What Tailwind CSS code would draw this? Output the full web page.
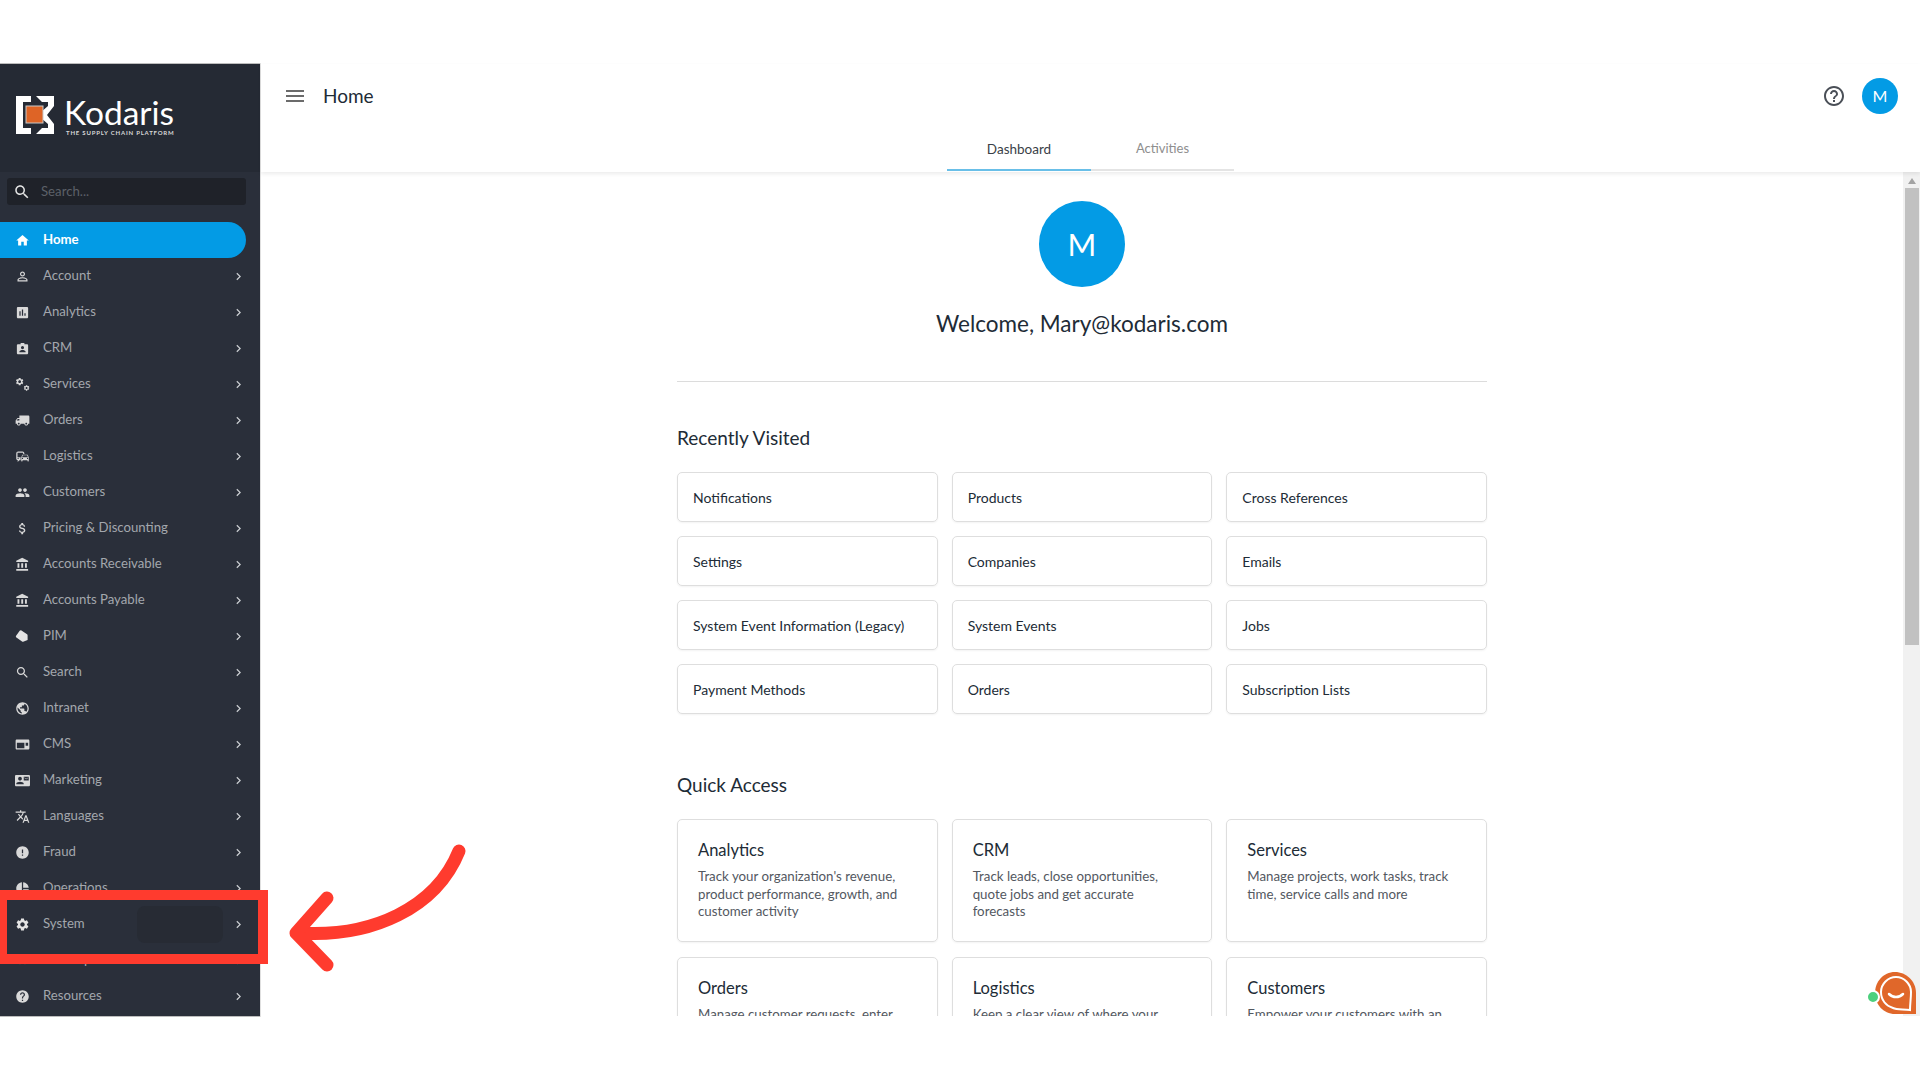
<!DOCTYPE html>
<html lang="en">
<head>
    <meta charset="UTF-8">
    <meta name="viewport" content="width=device-width, initial-scale=1.0">
    <title>Kodaris - Home</title>
    <script src="https://cdn.jsdelivr.net/npm/@tailwindcss/browser@4"></script>
</head>
<body class="bg-white font-['Lato','Liberation_Sans',sans-serif] text-[#212b36]">
<div class="relative h-[1080px] w-[1920px] overflow-hidden bg-white pt-[63px]">
    <div class="flex h-[954px]">

        <!-- Sidebar -->
        <aside class="flex w-[260px] shrink-0 flex-col overflow-hidden border-y border-[#bdbdbd] bg-[#2a2f3a] text-[13.200px] text-[#a3a7ad]">
            <div class="flex h-[108px] shrink-0 items-center bg-[#252a34] pb-[4px] pl-[15px]">
                <svg class="-mt-[3px] w-[40px] h-[40px] shrink-0" viewBox="0 0 40 40">
                    <path fill="#fff" d="M1 1H16V7H8V33H16V39H1Z"/>
                    <path fill="#fff" d="M21 1H39V11L32 20L39 29V39H21L27 33H33V29L26 23V17L33 11V7H27Z"/>
                    <rect x="11" y="11" width="17" height="17" fill="#de6426" stroke="#c9c9c9" stroke-width="1"/>
                </svg>
                <div class="ml-[9px] flex flex-col text-white">
                    <span class="text-[33.500px] leading-[32px]">Kodaris</span>
                    <span class="ml-[2px] mt-[1px] whitespace-nowrap text-[6px] leading-[7px] font-bold tracking-[0.8px] text-[#d8d8d8]">THE SUPPLY CHAIN PLATFORM</span>
                </div>
            </div>

            <div class="ml-[7px] mr-[14px] mt-[6px] flex h-[27px] shrink-0 items-center rounded-[3px] bg-[#1f2229] pl-[6px] text-[#5c6068]">
                <svg class="h-[18px] w-[18px]" viewBox="0 0 24 24" fill="#e4e4e4"><path d="M15.5 14h-.79l-.28-.27C15.41 12.59 16 11.11 16 9.5 16 5.91 13.09 3 9.5 3S3 5.91 3 9.5 5.91 16 9.5 16c1.61 0 3.09-.59 4.23-1.57l.27.28v.79l5 4.99L20.49 19l-4.99-5zm-6 0C7.01 14 5 11.99 5 9.5S7.01 5 9.5 5 14 7.01 14 9.5 11.99 14 9.5 14z"/></svg>
                <span class="ml-[10px]">Search...</span>
            </div>

            <nav class="mt-[17px] flex w-[246px] flex-col">
                <a class="flex h-[36px] items-center rounded-r-full bg-[#039be5] pl-[15px] font-bold text-white">
                    <svg class="h-[15px] w-[15px]" viewBox="0 0 24 24" fill="#fff"><path d="M10 20v-6h4v6h5v-8h3L12 3 2 12h3v8z"/></svg>
                    <span class="ml-[13px]">Home</span>
                </a>
                <a class="flex h-[36px] items-center pl-[15px]">
                    <svg class="h-[15px] w-[15px]" viewBox="0 0 24 24" fill="#d9d9d9"><path d="M12 5.9c1.16 0 2.1.94 2.1 2.1s-.94 2.1-2.1 2.1S9.9 9.16 9.9 8s.94-2.1 2.1-2.1m0 9c2.97 0 6.1 1.46 6.1 2.1v1.1H5.9V17c0-.64 3.13-2.1 6.1-2.1M12 4C9.79 4 8 5.79 8 8s1.79 4 4 4 4-1.79 4-4-1.79-4-4-4zm0 9c-2.67 0-8 1.34-8 4v3h16v-3c0-2.66-5.33-4-8-4z"/></svg>
                    <span class="ml-[13px] flex-1">Account</span>
                    <svg class="h-[15px] w-[15px]" viewBox="0 0 24 24" fill="#c9ccd0"><path d="M10 6L8.59 7.41 13.17 12l-4.58 4.59L10 18l6-6z"/></svg>
                </a>
                <a class="flex h-[36px] items-center pl-[15px]">
                    <svg class="h-[15px] w-[15px]" viewBox="0 0 24 24" fill="#d9d9d9"><path d="M19 3H5c-1.1 0-2 .9-2 2v14c0 1.1.9 2 2 2h14c1.1 0 2-.9 2-2V5c0-1.1-.9-2-2-2zM9 17H7v-7h2v7zm4 0h-2V7h2v10zm4 0h-2v-4h2v4z"/></svg>
                    <span class="ml-[13px] flex-1">Analytics</span>
                    <svg class="h-[15px] w-[15px]" viewBox="0 0 24 24" fill="#c9ccd0"><path d="M10 6L8.59 7.41 13.17 12l-4.58 4.59L10 18l6-6z"/></svg>
                </a>
                <a class="flex h-[36px] items-center pl-[15px]">
                    <svg class="h-[15px] w-[15px]" viewBox="0 0 24 24" fill="#d9d9d9"><path fill-rule="evenodd" d="M5 5h4V3h6v2h4c1.1 0 2 .9 2 2v12c0 1.1-.9 2-2 2H5c-1.1 0-2-.9-2-2V7c0-1.1.9-2 2-2zm7 3a2.5 2.5 0 1 0 0 5 2.5 2.5 0 0 0 0-5zm-5 10h10v-1c0-1.7-3.3-2.6-5-2.6S7 15.300 7 17z"/></svg>
                    <span class="ml-[13px] flex-1">CRM</span>
                    <svg class="h-[15px] w-[15px]" viewBox="0 0 24 24" fill="#c9ccd0"><path d="M10 6L8.59 7.41 13.17 12l-4.58 4.59L10 18l6-6z"/></svg>
                </a>
                <a class="flex h-[36px] items-center pl-[15px]">
                    <svg class="h-[15px] w-[15px]" viewBox="0 0 24 24" fill="#d9d9d9"><g transform="translate(0 0) scale(.62)"><path d="M19.14 12.94c.04-.3.06-.61.06-.94 0-.32-.02-.64-.07-.94l2.03-1.58c.18-.14.23-.41.12-.61l-1.92-3.32c-.12-.22-.37-.29-.59-.22l-2.39.96c-.5-.38-1.03-.7-1.62-.94l-.36-2.54c-.04-.24-.24-.41-.48-.41h-3.84c-.24 0-.43.17-.47.41l-.36 2.54c-.59.24-1.13.57-1.62.94l-2.39-.96c-.22-.08-.47 0-.59.22L2.74 8.87c-.12.21-.08.47.12.61l2.03 1.58c-.05.3-.09.63-.09.94s.02.64.07.94l-2.03 1.58c-.18.14-.23.41-.12.61l1.92 3.32c.12.22.37.29.59.22l2.39-.96c.5.38 1.03.7 1.62.94l.36 2.54c.05.24.24.41.48.41h3.84c.24 0 .44-.17.47-.41l.36-2.54c.59-.24 1.13-.56 1.62-.94l2.39.96c.22.08.47 0 .59-.22l1.92-3.32c.12-.22.07-.47-.12-.61l-2.01-1.58zM12 15.6c-1.98 0-3.6-1.62-3.6-3.6s1.62-3.6 3.6-3.6 3.6 1.62 3.6 3.6-1.62 3.6-3.6 3.6z"/></g><g transform="translate(13 12) scale(.46)"><path d="M19.14 12.94c.04-.3.06-.61.06-.94 0-.32-.02-.64-.07-.94l2.03-1.58c.18-.14.23-.41.12-.61l-1.92-3.32c-.12-.22-.37-.29-.59-.22l-2.39.96c-.5-.38-1.03-.7-1.62-.94l-.36-2.54c-.04-.24-.24-.41-.48-.41h-3.84c-.24 0-.43.17-.47.41l-.36 2.54c-.59.24-1.13.57-1.62.94l-2.39-.96c-.22-.08-.47 0-.59.22L2.74 8.87c-.12.21-.08.47.12.61l2.03 1.58c-.05.3-.09.63-.09.94s.02.64.07.94l-2.03 1.58c-.18.14-.23.41-.12.61l1.92 3.32c.12.22.37.29.59.22l2.39-.96c.5.38 1.03.7 1.62.94l.36 2.54c.05.24.24.41.48.41h3.84c.24 0 .44-.17.47-.41l.36-2.54c.59-.24 1.13-.56 1.62-.94l2.39.96c.22.08.47 0 .59-.22l1.92-3.32c.12-.22.07-.47-.12-.61l-2.01-1.58zM12 15.6c-1.98 0-3.6-1.62-3.6-3.6s1.62-3.6 3.6-3.6 3.6 1.62 3.6 3.6-1.62 3.6-3.6 3.6z"/></g></svg>
                    <span class="ml-[13px] flex-1">Services</span>
                    <svg class="h-[15px] w-[15px]" viewBox="0 0 24 24" fill="#c9ccd0"><path d="M10 6L8.59 7.41 13.17 12l-4.58 4.59L10 18l6-6z"/></svg>
                </a>
                <a class="flex h-[36px] items-center pl-[15px]">
                    <svg class="h-[15px] w-[15px] -scale-x-100" viewBox="0 0 24 24" fill="#d9d9d9"><path d="M20 8h-3V4H3c-1.1 0-2 .9-2 2v11h2c0 1.66 1.34 3 3 3s3-1.34 3-3h6c0 1.66 1.34 3 3 3s3-1.34 3-3h2v-5l-3-4zM6 18.500c-.83 0-1.500-.67-1.500-1.500s.67-1.500 1.500-1.500 1.500.67 1.500 1.500-.67 1.500-1.500 1.500zm13.500-9l1.960 2.500H17V9.500h2.500zm-1.500 9c-.83 0-1.500-.67-1.500-1.500s.67-1.500 1.500-1.500 1.500.67 1.500 1.500-.67 1.500-1.500 1.500z"/></svg>
                    <span class="ml-[13px] flex-1">Orders</span>
                    <svg class="h-[15px] w-[15px]" viewBox="0 0 24 24" fill="#c9ccd0"><path d="M10 6L8.59 7.41 13.17 12l-4.58 4.59L10 18l6-6z"/></svg>
                </a>
                <a class="flex h-[36px] items-center pl-[15px]">
                    <svg class="h-[15px] w-[15px]" viewBox="0 0 24 24" fill="#d9d9d9"><path d="M12 4H5C3.34 4 2 5.34 2 7v8c0 1.66 1.34 3 3 3l-1 1v1h1l2-2.03L9 18v-5H4V5.98L13 6v2h2V7c0-1.66-1.34-3-3-3zM5 14c.55 0 1 .45 1 1s-.45 1-1 1-1-.45-1-1 .45-1 1-1zm15.57-4.34c-.14-.4-.52-.66-.97-.66h-7.19c-.46 0-.83.26-.98.66L10 13.77l.01 5.51c0 .38.31.72.69.72h.62c.38 0 .68-.38.68-.76V18h8v1.24c0 .38.31.76.69.76h.61c.38 0 .69-.34.69-.72l.01-1.37v-4.14l-1.43-4.11zm-8.16.34h7.19l1.03 3h-9.25l1.03-3zM12 16c-.55 0-1-.45-1-1s.45-1 1-1 1 .45 1 1-.45 1-1 1zm8 0c-.55 0-1-.45-1-1s.45-1 1-1 1 .45 1 1-.45 1-1 1z"/></svg>
                    <span class="ml-[13px] flex-1">Logistics</span>
                    <svg class="h-[15px] w-[15px]" viewBox="0 0 24 24" fill="#c9ccd0"><path d="M10 6L8.59 7.41 13.17 12l-4.58 4.59L10 18l6-6z"/></svg>
                </a>
                <a class="flex h-[36px] items-center pl-[15px]">
                    <svg class="h-[15px] w-[15px]" viewBox="0 0 24 24" fill="#d9d9d9"><path d="M16 11c1.66 0 2.99-1.34 2.99-3S17.66 5 16 5c-1.66 0-3 1.34-3 3s1.34 3 3 3zm-8 0c1.66 0 2.99-1.34 2.99-3S9.660 5 8 5C6.340 5 5 6.340 5 8s1.340 3 3 3zm0 2c-2.330 0-7 1.170-7 3.500V19h14v-2.500c0-2.330-4.670-3.500-7-3.500zm8 0c-.29 0-.62.02-.97.05 1.160.84 1.970 1.970 1.970 3.450V19h6v-2.500c0-2.330-4.670-3.500-7-3.500z"/></svg>
                    <span class="ml-[13px] flex-1">Customers</span>
                    <svg class="h-[15px] w-[15px]" viewBox="0 0 24 24" fill="#c9ccd0"><path d="M10 6L8.59 7.41 13.17 12l-4.58 4.59L10 18l6-6z"/></svg>
                </a>
                <a class="flex h-[36px] items-center pl-[15px]">
                    <svg class="h-[15px] w-[15px]" viewBox="0 0 24 24" fill="#d9d9d9"><path d="M11.8 10.9c-2.27-.59-3-1.2-3-2.15 0-1.09 1.01-1.85 2.7-1.85 1.78 0 2.44.85 2.5 2.1h2.21c-.07-1.72-1.12-3.3-3.21-3.81V3h-3v2.16c-1.94.42-3.5 1.68-3.5 3.61 0 2.31 1.91 3.46 4.7 4.13 2.5.6 3 1.48 3 2.41 0 .69-.49 1.79-2.7 1.79-2.06 0-2.87-.92-2.98-2.1h-2.2c.12 2.19 1.76 3.42 3.68 3.83V21h3v-2.15c1.95-.37 3.5-1.5 3.5-3.55 0-2.84-2.43-3.81-4.7-4.4z"/></svg>
                    <span class="ml-[13px] flex-1">Pricing &amp; Discounting</span>
                    <svg class="h-[15px] w-[15px]" viewBox="0 0 24 24" fill="#c9ccd0"><path d="M10 6L8.59 7.41 13.17 12l-4.58 4.59L10 18l6-6z"/></svg>
                </a>
                <a class="flex h-[36px] items-center pl-[15px]">
                    <svg class="h-[15px] w-[15px]" viewBox="0 0 24 24" fill="#d9d9d9"><path d="M4 10v7h3v-7H4zm6 0v7h3v-7h-3zM2 22h19v-3H2v3zm14-12v7h3v-7h-3zm-4.500-9L2 6v2h19V6l-9.500-5z"/></svg>
                    <span class="ml-[13px] flex-1">Accounts Receivable</span>
                    <svg class="h-[15px] w-[15px]" viewBox="0 0 24 24" fill="#c9ccd0"><path d="M10 6L8.59 7.41 13.17 12l-4.58 4.59L10 18l6-6z"/></svg>
                </a>
                <a class="flex h-[36px] items-center pl-[15px]">
                    <svg class="h-[15px] w-[15px]" viewBox="0 0 24 24" fill="#d9d9d9"><path d="M4 10v7h3v-7H4zm6 0v7h3v-7h-3zM2 22h19v-3H2v3zm14-12v7h3v-7h-3zm-4.500-9L2 6v2h19V6l-9.500-5z"/></svg>
                    <span class="ml-[13px] flex-1">Accounts Payable</span>
                    <svg class="h-[15px] w-[15px]" viewBox="0 0 24 24" fill="#c9ccd0"><path d="M10 6L8.59 7.41 13.17 12l-4.58 4.59L10 18l6-6z"/></svg>
                </a>
                <a class="flex h-[36px] items-center pl-[15px]">
                    <svg class="h-[15px] w-[15px]" viewBox="0 0 24 24" fill="#e4e4e4"><path transform="rotate(35 12 12)" d="M17.630 5.840C17.270 5.330 16.670 5 16 5L5 5.010C3.900 5.010 3 5.900 3 7v10c0 1.100.9 1.990 2 1.990L16 19c.67 0 1.270-.33 1.630-.84L22 12l-4.370-6.160z"/></svg>
                    <span class="ml-[13px] flex-1">PIM</span>
                    <svg class="h-[15px] w-[15px]" viewBox="0 0 24 24" fill="#c9ccd0"><path d="M10 6L8.59 7.41 13.17 12l-4.58 4.59L10 18l6-6z"/></svg>
                </a>
                <a class="flex h-[36px] items-center pl-[15px]">
                    <svg class="h-[15px] w-[15px]" viewBox="0 0 24 24" fill="#d9d9d9"><path d="M15.5 14h-.79l-.28-.27C15.41 12.59 16 11.11 16 9.5 16 5.91 13.09 3 9.5 3S3 5.91 3 9.5 5.91 16 9.5 16c1.61 0 3.09-.59 4.23-1.57l.27.28v.79l5 4.99L20.49 19l-4.99-5zm-6 0C7.01 14 5 11.99 5 9.5S7.01 5 9.5 5 14 7.01 14 9.5 11.99 14 9.5 14z"/></svg>
                    <span class="ml-[13px] flex-1">Search</span>
                    <svg class="h-[15px] w-[15px]" viewBox="0 0 24 24" fill="#c9ccd0"><path d="M10 6L8.59 7.41 13.17 12l-4.58 4.59L10 18l6-6z"/></svg>
                </a>
                <a class="flex h-[36px] items-center pl-[15px]">
                    <svg class="h-[15px] w-[15px]" viewBox="0 0 24 24" fill="#d9d9d9"><path d="M12 2C6.48 2 2 6.48 2 12s4.480 10 10 10 10-4.480 10-10S17.520 2 12 2zm-1 17.930c-3.950-.49-7-3.850-7-7.930 0-.62.08-1.210.21-1.790L9 15v1c0 1.100.9 2 2 2v1.930zm6.900-2.540c-.26-.81-1-1.390-1.900-1.390h-1v-3c0-.55-.45-1-1-1H8v-2h2c.55 0 1-.45 1-1V7h2c1.100 0 2-.9 2-2v-.41c2.930 1.190 5 4.060 5 7.410 0 2.080-.8 3.970-2.100 5.390z"/></svg>
                    <span class="ml-[13px] flex-1">Intranet</span>
                    <svg class="h-[15px] w-[15px]" viewBox="0 0 24 24" fill="#c9ccd0"><path d="M10 6L8.59 7.41 13.17 12l-4.58 4.59L10 18l6-6z"/></svg>
                </a>
                <a class="flex h-[36px] items-center pl-[15px]">
                    <svg class="h-[15px] w-[15px]" viewBox="0 0 24 24" fill="#d9d9d9"><path fill-rule="evenodd" d="M3 4h18c1.100 0 2 .9 2 2v12c0 1.100-.9 2-2 2H3c-1.100 0-2-.9-2-2V6c0-1.100.9-2 2-2zm0 5v9h12V9zm14 0v5h4V9z"/></svg>
                    <span class="ml-[13px] flex-1">CMS</span>
                    <svg class="h-[15px] w-[15px]" viewBox="0 0 24 24" fill="#c9ccd0"><path d="M10 6L8.59 7.41 13.17 12l-4.58 4.59L10 18l6-6z"/></svg>
                </a>
                <a class="flex h-[36px] items-center pl-[15px]">
                    <svg class="h-[15px] w-[15px]" viewBox="0 0 24 24" fill="#d9d9d9"><path d="M21 8V7l-3 2-3-2v1l3 2 3-2zm1-5H2C.9 3 0 3.900 0 5v14c0 1.100.9 2 2 2h20c1.100 0 1.990-.9 1.990-2L24 5c0-1.100-.9-2-2-2zM8 6c1.660 0 3 1.340 3 3s-1.340 3-3 3-3-1.340-3-3 1.340-3 3-3zm6 12H2v-1c0-2 4-3.100 6-3.100s6 1.100 6 3.100v1zm8-6h-8V6h8v6z"/></svg>
                    <span class="ml-[13px] flex-1">Marketing</span>
                    <svg class="h-[15px] w-[15px]" viewBox="0 0 24 24" fill="#c9ccd0"><path d="M10 6L8.59 7.41 13.17 12l-4.58 4.59L10 18l6-6z"/></svg>
                </a>
                <a class="flex h-[36px] items-center pl-[15px]">
                    <svg class="h-[15px] w-[15px]" viewBox="0 0 24 24" fill="#d9d9d9"><path d="M12.870 15.070l-2.540-2.510.03-.03c1.740-1.940 2.980-4.170 3.710-6.530H17V4h-7V2H8v2H1v1.990h11.170C11.500 7.920 10.440 9.750 9 11.350 8.070 10.320 7.300 9.190 6.690 8h-2c.73 1.630 1.730 3.170 2.980 4.560l-5.090 5.020L4 19l5-5 3.110 3.110.76-2.040zM18.500 10h-2L12 22h2l1.120-3h4.750L21 22h2l-4.500-12zm-2.620 7l1.620-4.330L19.120 17h-3.240z"/></svg>
                    <span class="ml-[13px] flex-1">Languages</span>
                    <svg class="h-[15px] w-[15px]" viewBox="0 0 24 24" fill="#c9ccd0"><path d="M10 6L8.59 7.41 13.17 12l-4.58 4.59L10 18l6-6z"/></svg>
                </a>
                <a class="flex h-[36px] items-center pl-[15px]">
                    <svg class="h-[15px] w-[15px]" viewBox="0 0 24 24" fill="#d9d9d9"><path d="M12 2C6.480 2 2 6.480 2 12s4.480 10 10 10 10-4.480 10-10S17.520 2 12 2zm1 15h-2v-2h2v2zm0-4h-2V7h2v6z"/></svg>
                    <span class="ml-[13px] flex-1">Fraud</span>
                    <svg class="h-[15px] w-[15px]" viewBox="0 0 24 24" fill="#c9ccd0"><path d="M10 6L8.59 7.41 13.17 12l-4.58 4.59L10 18l6-6z"/></svg>
                </a>
                <a class="flex h-[36px] items-center pl-[15px]">
                    <svg class="h-[15px] w-[15px]" viewBox="0 0 24 24" fill="#d9d9d9"><path d="M11 2v20c-5.070-.5-9-4.790-9-10s3.930-9.500 9-10zm2.030 0v8.990H22c-.47-4.740-4.240-8.520-8.970-8.990zm0 11.010V22c4.740-.47 8.500-4.250 8.970-8.990h-8.970z"/></svg>
                    <span class="ml-[13px] flex-1">Operations</span>
                    <svg class="h-[15px] w-[15px]" viewBox="0 0 24 24" fill="#c9ccd0"><path d="M10 6L8.59 7.41 13.17 12l-4.58 4.59L10 18l6-6z"/></svg>
                </a>
                <a class="flex h-[36px] items-center pl-[15px]">
                    <svg class="h-[15px] w-[15px]" viewBox="0 0 24 24" fill="#e4e4e4"><path d="M19.140 12.940c.04-.3.06-.61.06-.94 0-.32-.02-.64-.07-.94l2.030-1.580c.18-.14.23-.41.12-.61l-1.920-3.320c-.12-.22-.37-.29-.59-.22l-2.390.96c-.5-.38-1.030-.7-1.620-.94l-.36-2.540c-.04-.24-.24-.41-.48-.41h-3.840c-.24 0-.43.17-.47.41l-.36 2.540c-.59.24-1.130.57-1.620.94l-2.390-.96c-.22-.08-.47 0-.59.22L2.740 8.870c-.12.21-.08.47.12.61l2.030 1.580c-.05.3-.09.63-.09.94s.02.64.07.94l-2.030 1.580c-.18.14-.23.41-.12.61l1.920 3.320c.12.22.37.29.59.22l2.390-.96c.5.38 1.030.7 1.620.94l.36 2.54c.05.24.24.41.48.41h3.840c.24 0 .44-.17.47-.41l.36-2.540c.59-.24 1.130-.56 1.620-.94l2.390.96c.22.08.47 0 .59-.22l1.920-3.320c.12-.22.07-.47-.12-.61l-2.010-1.580zM12 15.600c-1.980 0-3.600-1.620-3.600-3.600s1.620-3.600 3.600-3.600 3.600 1.620 3.600 3.600-1.620 3.600-3.600 3.600z"/></svg>
                    <span class="ml-[13px] flex-1">System</span>
                    <svg class="h-[15px] w-[15px]" viewBox="0 0 24 24" fill="#c9ccd0"><path d="M10 6L8.59 7.41 13.17 12l-4.58 4.59L10 18l6-6z"/></svg>
                </a>
                <a class="flex h-[36px] items-center pl-[15px]">
                    <svg class="h-[15px] w-[15px]" viewBox="0 0 24 24" fill="#d9d9d9"><path d="M9.400 16.600L4.800 12l4.600-4.600L8 6l-6 6 6 6 1.400-1.400zm5.200 0l4.600-4.600-4.600-4.600L16 6l6 6-6 6-1.400-1.400z"/></svg>
                    <span class="ml-[13px] flex-1">Development</span>
                    <svg class="h-[15px] w-[15px]" viewBox="0 0 24 24" fill="#c9ccd0"><path d="M10 6L8.59 7.41 13.17 12l-4.58 4.59L10 18l6-6z"/></svg>
                </a>
                <a class="flex h-[36px] items-center pl-[15px]">
                    <svg class="h-[15px] w-[15px]" viewBox="0 0 24 24" fill="#d9d9d9"><path d="M12 2C6.480 2 2 6.480 2 12s4.480 10 10 10 10-4.480 10-10S17.520 2 12 2zm1 17h-2v-2h2v2zm2.070-7.750l-.9.92C13.450 12.900 13 13.500 13 15h-2v-.5c0-1.100.45-2.100 1.170-2.830l1.240-1.260c.37-.36.59-.86.59-1.410 0-1.100-.9-2-2-2s-2 .9-2 2H8c0-2.210 1.790-4 4-4s4 1.790 4 4c0 .88-.36 1.680-.93 2.250z"/></svg>
                    <span class="ml-[13px] flex-1">Resources</span>
                    <svg class="h-[15px] w-[15px]" viewBox="0 0 24 24" fill="#c9ccd0"><path d="M10 6L8.59 7.41 13.17 12l-4.58 4.59L10 18l6-6z"/></svg>
                </a>
            </nav>
        </aside>

        <!-- Main -->
        <main class="flex min-w-0 flex-1 flex-col border-l border-[#e0e0e0] py-[1px]">
            <header class="relative z-10 h-[108px] shrink-0 shadow-[0_2px_4px_rgba(0,0,0,0.08)]">
                <div class="flex h-[64px] items-center pl-[22px] pr-[22px]">
                    <svg class="h-[24px] w-[24px] text-[#6b6b6b]" viewBox="0 0 24 24" fill="currentColor"><path d="M3 18h18v-2H3v2zm0-5h18v-2H3v2zm0-7v2h18V6H3z"/></svg>
                    <h1 class="ml-[16px] text-[19px]">Home</h1>
                    <svg class="ml-auto h-[24px] w-[24px] text-[#4a4f57]" viewBox="0 0 24 24" fill="currentColor"><path d="M11 18h2v-2h-2v2zm1-16C6.480 2 2 6.480 2 12s4.480 10 10 10 10-4.480 10-10S17.520 2 12 2zm0 18c-4.410 0-8-3.590-8-8s3.590-8 8-8 8 3.590 8 8-3.590 8-8 8zm0-14c-2.210 0-4 1.790-4 4h2c0-1.100.9-2 2-2s2 .9 2 2c0 2-3 1.750-3 5h2c0-2.250 3-2.500 3-5 0-2.210-1.790-4-4-4z"/></svg>
                    <div class="ml-[16px] flex h-[36px] w-[36px] items-center justify-center rounded-full bg-[#039be5] text-[16px] text-white">M</div>
                </div>
                <div class="flex h-[44px] justify-center">
                    <div class="flex h-[43px] w-[144px] items-center justify-center border-b-2 border-[#69bfe8] pt-[1px] text-[13.500px] text-[#3a3f47]">Dashboard</div>
                    <div class="flex h-[43px] w-[143px] items-center justify-center border-b-2 border-[#e4e4e4] pt-[1px] text-[13px] text-[#8e8e8e]">Activities</div>
                </div>
            </header>

            <div class="flex min-h-0 flex-1 overflow-hidden">
                <div class="flex min-w-0 flex-1 flex-col items-center overflow-hidden pt-[29px]">
                    <div class="flex h-[86px] w-[86px] shrink-0 items-center justify-center rounded-full bg-[#039be5] text-[31px] text-white">M</div>
                    <p class="mt-[21px] text-[22.500px] leading-[32px]">Welcome, Mary@kodaris.com</p>
                    <div class="mt-[41px] w-[810px] shrink-0 border-t border-[#dcdcdc]"></div>

                    <section class="w-[810px] shrink-0">
                        <h2 class="mt-[44px] text-[19px] leading-[24px]">Recently Visited</h2>
                        <div class="mt-[22px] grid grid-cols-3 gap-[14px] text-[14px]">
                            <div class="flex h-[50px] items-center rounded-[5px] border border-[#dedede] px-[15px] shadow-[0_1px_2px_rgba(0,0,0,0.05)]">Notifications</div>
                            <div class="flex h-[50px] items-center rounded-[5px] border border-[#dedede] px-[15px] shadow-[0_1px_2px_rgba(0,0,0,0.05)]">Products</div>
                            <div class="flex h-[50px] items-center rounded-[5px] border border-[#dedede] px-[15px] shadow-[0_1px_2px_rgba(0,0,0,0.05)]">Cross References</div>
                            <div class="flex h-[50px] items-center rounded-[5px] border border-[#dedede] px-[15px] shadow-[0_1px_2px_rgba(0,0,0,0.05)]">Settings</div>
                            <div class="flex h-[50px] items-center rounded-[5px] border border-[#dedede] px-[15px] shadow-[0_1px_2px_rgba(0,0,0,0.05)]">Companies</div>
                            <div class="flex h-[50px] items-center rounded-[5px] border border-[#dedede] px-[15px] shadow-[0_1px_2px_rgba(0,0,0,0.05)]">Emails</div>
                            <div class="flex h-[50px] items-center rounded-[5px] border border-[#dedede] px-[15px] shadow-[0_1px_2px_rgba(0,0,0,0.05)]">System Event Information (Legacy)</div>
                            <div class="flex h-[50px] items-center rounded-[5px] border border-[#dedede] px-[15px] shadow-[0_1px_2px_rgba(0,0,0,0.05)]">System Events</div>
                            <div class="flex h-[50px] items-center rounded-[5px] border border-[#dedede] px-[15px] shadow-[0_1px_2px_rgba(0,0,0,0.05)]">Jobs</div>
                            <div class="flex h-[50px] items-center rounded-[5px] border border-[#dedede] px-[15px] shadow-[0_1px_2px_rgba(0,0,0,0.05)]">Payment Methods</div>
                            <div class="flex h-[50px] items-center rounded-[5px] border border-[#dedede] px-[15px] shadow-[0_1px_2px_rgba(0,0,0,0.05)]">Orders</div>
                            <div class="flex h-[50px] items-center rounded-[5px] border border-[#dedede] px-[15px] shadow-[0_1px_2px_rgba(0,0,0,0.05)]">Subscription Lists</div>
                        </div>
                    </section>

                    <section class="w-[810px] shrink-0">
                        <h2 class="mt-[59px] text-[19px] leading-[24px]">Quick Access</h2>
                        <div class="mt-[22px] grid grid-cols-3 gap-x-[14px] gap-y-[15px]">
                            <div class="h-[123px] rounded-[5px] border border-[#dedede] px-[20px] pt-[19px] shadow-[0_1px_2px_rgba(0,0,0,0.05)]">
                                <h3 class="text-[16.500px] leading-[22px]">Analytics</h3>
                                <p class="mt-[7px] max-w-[212px] text-[13.300px] leading-[17.500px] text-[#53585f]">Track your organization's revenue, product performance, growth, and customer activity</p>
                            </div>
                            <div class="h-[123px] rounded-[5px] border border-[#dedede] px-[20px] pt-[19px] shadow-[0_1px_2px_rgba(0,0,0,0.05)]">
                                <h3 class="text-[16.500px] leading-[22px]">CRM</h3>
                                <p class="mt-[7px] max-w-[212px] text-[13.300px] leading-[17.500px] text-[#53585f]">Track leads, close opportunities, quote jobs and get accurate forecasts</p>
                            </div>
                            <div class="h-[123px] rounded-[5px] border border-[#dedede] px-[20px] pt-[19px] shadow-[0_1px_2px_rgba(0,0,0,0.05)]">
                                <h3 class="text-[16.500px] leading-[22px]">Services</h3>
                                <p class="mt-[7px] max-w-[212px] text-[13.300px] leading-[17.500px] text-[#53585f]">Manage projects, work tasks, track time, service calls and more</p>
                            </div>
                            <div class="h-[123px] rounded-[5px] border border-[#dedede] px-[20px] pt-[19px] shadow-[0_1px_2px_rgba(0,0,0,0.05)]">
                                <h3 class="text-[16.500px] leading-[22px]">Orders</h3>
                                <p class="mt-[7px] max-w-[212px] text-[13.300px] leading-[17.500px] text-[#53585f]">Manage customer requests, enter</p>
                            </div>
                            <div class="h-[123px] rounded-[5px] border border-[#dedede] px-[20px] pt-[19px] shadow-[0_1px_2px_rgba(0,0,0,0.05)]">
                                <h3 class="text-[16.500px] leading-[22px]">Logistics</h3>
                                <p class="mt-[7px] max-w-[212px] text-[13.300px] leading-[17.500px] text-[#53585f]">Keep a clear view of where your</p>
                            </div>
                            <div class="h-[123px] rounded-[5px] border border-[#dedede] px-[20px] pt-[19px] shadow-[0_1px_2px_rgba(0,0,0,0.05)]">
                                <h3 class="text-[16.500px] leading-[22px]">Customers</h3>
                                <p class="mt-[7px] max-w-[212px] text-[13.300px] leading-[17.500px] text-[#53585f]">Empower your customers with an</p>
                            </div>
                        </div>
                    </section>
                </div>

                <!-- Scrollbar -->
                <div class="flex w-[17px] shrink-0 flex-col items-center bg-[#f1f1f1]">
                    <svg class="mt-[5px] h-[8px] w-[10px]" viewBox="0 0 10 8" fill="#a3a3a3"><path d="M5 1L9 7H1Z"/></svg>
                    <div class="mt-[3px] h-[457px] w-[14px] bg-[#c1c1c1]"></div>
                </div>
            </div>
        </main>
    </div>

    <!-- Annotation: highlight box, blurred patch and arrow -->
    <div class="absolute left-[137px] top-[906px] h-[37px] w-[86px] rounded-[8px] bg-[#272b34]"></div>
    <div class="absolute left-0 top-[890px] h-[74px] w-[268px] border-y-[10px] border-r-[10px] border-l-[7px] border-[#ff3b2e]"></div>
    <svg class="absolute left-[280px] top-[835px] h-[145px] w-[190px]" viewBox="280 835 190 145" fill="none" stroke="#ff3b2e" stroke-width="13" stroke-linecap="round" stroke-linejoin="round">
        <path d="M459 851C436 908 372 938 298 933"/>
        <path d="M327 898L296 933L327 965"/>
    </svg>

    <!-- Chat widget -->
    <svg class="absolute left-[1866px] top-[970px] h-[46px] w-[52px]" viewBox="0 0 52 46">
        <path fill="#e0672a" d="M29 2C40 2 50 11 50 23V44H29C17 44 9 34 9 23S17 2 29 2Z"/>
        <path fill="none" stroke="#fff" stroke-width="2" d="M30 7C38 7 45 14 45 22C45 28 44 34 44 40C37 39 31 40 27 38C20 36 15 30 15 22C15 14 22 7 30 7Z"/>
        <path fill="none" stroke="#fff" stroke-width="2.500" stroke-linecap="round" d="M23 24C27 28 33 28 37 24"/>
        <circle cx="7" cy="27" r="6" fill="#4cd07d" stroke="#fff" stroke-width="2"/>
    </svg>
</div>
</body>
</html>
